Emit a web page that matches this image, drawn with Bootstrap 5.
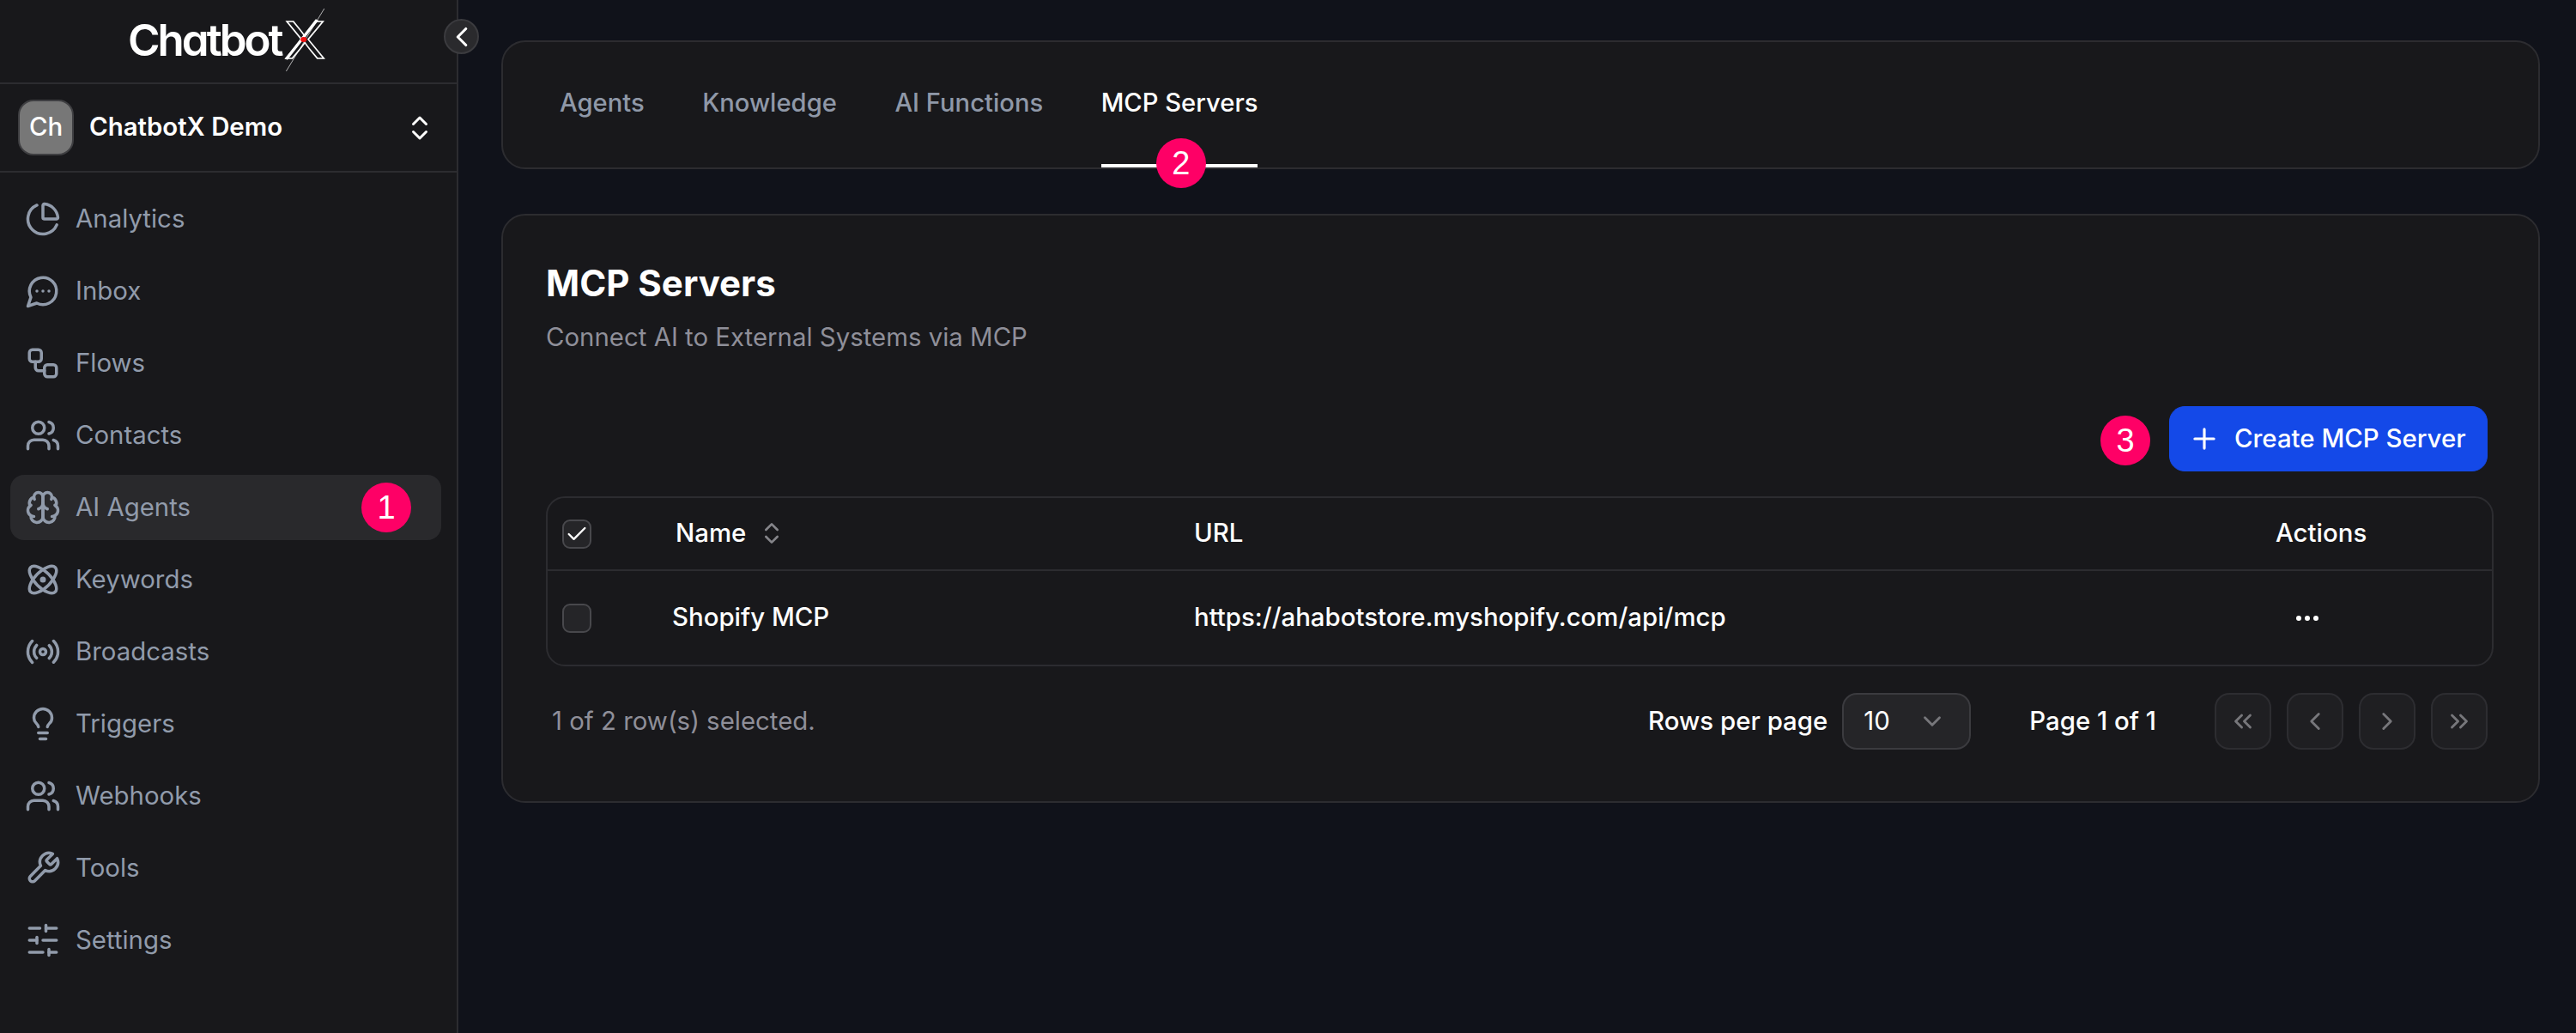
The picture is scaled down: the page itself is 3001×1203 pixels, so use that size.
<!DOCTYPE html>
<html lang="en">
<head>
    <meta charset="UTF-8">
    <meta name="viewport" content="width=device-width, initial-scale=1.0">
    <title>MCP Servers</title>
    <link href="https://cdn.jsdelivr.net/npm/bootstrap@5.3.0/dist/css/bootstrap.min.css" rel="stylesheet">
    <style>
        html, body { height: 100%; }
        body {
            font-family: Inter, "Liberation Sans", sans-serif;
            background-color: #10121a;
            color: #fff;
            font-size: 29.4px;
            overflow: hidden;
        }
        svg.ico { fill: none; stroke: currentColor; stroke-width: 2; stroke-linecap: round; stroke-linejoin: round; flex-shrink: 0; display: block; }

        .side-bar { width: 534px; height: 100%; background-color: #18181b; border-right: 2px solid #2c2c30; position: relative; flex-shrink: 0; }
        .side-logo { height: 98px; border-bottom: 2px solid #2c2c30; padding-left: 149px; padding-bottom: 4px; }
        .logo-word { font-size: 51px; font-weight: 600; line-height: 1; letter-spacing: -3px; font-feature-settings: "cv11"; }
        .logo-x { position: relative; display: inline-block; font-size: 59px; font-weight: 400; line-height: 1; color: #18181b; -webkit-text-stroke: 1.4px #fff; margin-left: 7px; transform: scaleX(1.2); }
        .logo-x svg { position: absolute; left: -8px; top: -10px; }
        .collapse-btn { position: absolute; left: 517px; top: 22px; width: 41px; height: 41px; border-radius: 50%; background-color: #2a2a2d; border: 2px solid #3b3b3f; color: #fff; padding: 0; }
        .org-pick { height: 103px; border-bottom: 2px solid #2c2c30; padding: 0 25px 0 21px; }
        .org-avatar { width: 65px; height: 65px; border-radius: 18px; background-color: #777; border: 2px solid #3f3f42; font-size: 29.4px; font-weight: 500; }
        .org-name { font-weight: 600; margin-left: 18px; }

        .side-nav { padding: 16px 18px 0 12px; gap: 8px; }
        .side-nav .nav-link { height: 76px; padding: 0 0 0 17px; border-radius: 16px; color: #919bab; gap: 17px; position: relative; font-size: 29.4px; }
        .side-nav .nav-link.on { background-color: #29292c; }

        .step-dot { position: absolute; width: 58px; height: 58px; border-radius: 50%; background-color: #fe0066; color: #fff; font-family: "Liberation Sans", Arial, sans-serif; font-size: 38px; font-weight: 400; line-height: 1; display: flex; align-items: center; justify-content: center; z-index: 2; }
        .dot-one { right: 35px; top: 9px; }
        .dot-two { left: 64px; bottom: -24px; }
        .dot-three { right: 400px; top: 11px; }

        .main-pane { padding: 47px 42px 0 50px; }
        .pane-card { background-color: #18181b; border: 2px solid #2c2c30; border-radius: 28px; }
        .tab-card { height: 150px; padding-left: 66px; gap: 67.5px; margin-bottom: 52px; }
        .tab-item { position: relative; color: #8f98a8; font-weight: 500; font-size: 29.2px; height: 100%; padding-top: 53px; line-height: 36px; text-decoration: none; }
        .tab-item.on { color: #fff; }
        .tab-item.on::after { content: ""; position: absolute; left: 0; right: 0; bottom: 0; height: 4px; background-color: #fff; }

        .list-card { padding: 54px 52px 60px 50px; }
        .list-title { font-size: 42px; font-weight: 700; line-height: 50px; margin: 0 0 18px; }
        .list-sub { line-height: 40px; color: #8f8f99; margin: 0 0 60px; }
        .btn-create { width: 371px; height: 76px; background-color: #1449e8; border-color: #1449e8; border-radius: 18px; font-size: 29.4px; font-weight: 500; color: #fff; padding: 0 0 0 21px; gap: 16px; white-space: nowrap; }
        .btn-row { padding-right: 7px; margin-bottom: 29px; position: relative; }

        .grid-wrap { border: 2px solid #2c2c30; border-radius: 22px; overflow: hidden; margin-bottom: 31px; }
        .grid-table { --bs-table-bg: transparent; --bs-table-color: #fff; --bs-table-border-color: #2c2c30; table-layout: fixed; margin: 0; width: 100%; }
        .grid-table > :not(caption) > * > * { padding: 0 0 0 14px; vertical-align: middle; font-weight: 500; font-size: 29.4px; color: #fff; }
        .grid-table thead tr { height: 84px; }
        .grid-table thead th { border-bottom: 2px solid #2c2c30; }
        .grid-table tbody tr { height: 110px; }
        .grid-table tbody td { border-bottom: 0; }
        .grid-table .col-check { padding-left: 17px; }
        .col-w1 { width: 131px; }
        .col-w2 { width: 608px; }
        .col-w3 { width: 1260px; }
        .head-name { padding-left: 4px; gap: 14px; }
        .sort-ico { color: #85858a; }
        .tick-box { width: 34px; height: 34px; border-radius: 9px; background-color: #252528; border: 2px solid #48484c; color: #fff; }
        .row-more { display: block; margin-left: 23px; fill: #fff; }

        .foot-row { padding: 0 7px; height: 66px; }
        .foot-note { color: #8f8f99; }
        .foot-label { font-weight: 500; white-space: nowrap; }
        .size-pick { width: 150px; height: 66px; border: 2px solid #3b3b3f; border-radius: 17px; background-color: #252528; margin-left: 17px; margin-right: 68px; padding: 0 26px 0 23px; }
        .size-ico { color: #77777b; }
        .page-btn { width: 66px; height: 66px; border-radius: 17px; border: 2px solid #2d2d31; background-color: #1f1f22; color: #77777b; padding: 0; }
        .page-set { gap: 18px; margin-left: 68px; }
    </style>
</head>
<body class="d-flex">
    <aside class="side-bar d-flex flex-column">
        <div class="side-logo d-flex align-items-center">
            <span class="logo-word">Chatbot</span>
            <span class="logo-x">X<svg width="60" height="80" viewBox="0 0 60 80"><line x1="47" y1="3" x2="10" y2="76" stroke="#fff" stroke-width="0.6"/><line x1="40" y1="16" x2="10" y2="62" stroke="#fff" stroke-width="3"/><circle cx="27" cy="39" r="3" fill="#f01010"/></svg></span>
        </div>
        <button class="collapse-btn d-flex align-items-center justify-content-center" type="button" aria-label="Collapse">
            <svg class="ico" width="38" height="38" viewBox="0 0 24 24"><path d="m15 18-6-6 6-6"/></svg>
        </button>
        <div class="org-pick d-flex align-items-center">
            <div class="org-avatar d-flex align-items-center justify-content-center">Ch</div>
            <div class="org-name flex-grow-1">ChatbotX Demo</div>
            <svg class="ico" width="36" height="36" viewBox="0 0 24 24"><path d="m7 15 5 5 5-5"/><path d="m7 9 5-5 5 5"/></svg>
        </div>
        <nav class="nav flex-column side-nav">
            <a class="nav-link d-flex align-items-center" href="#"><svg class="ico" width="42" height="42" viewBox="0 0 24 24"><path d="M21 12c.552 0 1.005-.449.95-.998a10 10 0 0 0-8.953-8.951c-.55-.055-.998.398-.998.95v8a1 1 0 0 0 1 1z"/><path d="M21.21 15.89A10 10 0 1 1 8 2.83"/></svg>Analytics</a>
            <a class="nav-link d-flex align-items-center" href="#"><svg class="ico" width="42" height="42" viewBox="0 0 24 24"><path d="M7.9 20A9 9 0 1 0 4 16.1L2 22Z"/><path d="M8 12h.01"/><path d="M12 12h.01"/><path d="M16 12h.01"/></svg>Inbox</a>
            <a class="nav-link d-flex align-items-center" href="#"><svg class="ico" width="42" height="42" viewBox="0 0 24 24"><rect width="8" height="8" x="3" y="3" rx="2"/><path d="M7 11v4a2 2 0 0 0 2 2h4"/><rect width="8" height="8" x="13" y="13" rx="2"/></svg>Flows</a>
            <a class="nav-link d-flex align-items-center" href="#"><svg class="ico" width="42" height="42" viewBox="0 0 24 24"><path d="M16 21v-2a4 4 0 0 0-4-4H6a4 4 0 0 0-4 4v2"/><circle cx="9" cy="7" r="4"/><path d="M22 21v-2a4 4 0 0 0-3-3.87"/><path d="M16 3.13a4 4 0 0 1 0 7.75"/></svg>Contacts</a>
            <a class="nav-link on d-flex align-items-center" href="#"><svg class="ico" width="42" height="42" viewBox="0 0 24 24"><path d="M12 5a3 3 0 1 0-5.997.125 4 4 0 0 0-2.526 5.77 4 4 0 0 0 .556 6.588A4 4 0 1 0 12 18Z"/><path d="M12 5a3 3 0 1 1 5.997.125 4 4 0 0 1 2.526 5.77 4 4 0 0 1-.556 6.588A4 4 0 1 1 12 18Z"/><path d="M15 13a4.5 4.5 0 0 1-3-4 4.5 4.5 0 0 1-3 4"/><path d="M17.599 6.5a3 3 0 0 0 .399-1.375"/><path d="M6.003 5.125A3 3 0 0 0 6.401 6.5"/><path d="M3.477 10.896a4 4 0 0 1 .585-.396"/><path d="M19.938 10.5a4 4 0 0 1 .585.396"/><path d="M6 18a4 4 0 0 1-1.967-.516"/><path d="M19.967 17.484A4 4 0 0 1 18 18"/></svg>AI Agents<span class="step-dot dot-one">1</span></a>
            <a class="nav-link d-flex align-items-center" href="#"><svg class="ico" width="42" height="42" viewBox="0 0 24 24"><circle cx="12" cy="12" r="1"/><path d="M20.2 20.2c2.04-2.03.02-7.36-4.5-11.9-4.54-4.52-9.87-6.54-11.9-4.5-2.04 2.03-.02 7.36 4.5 11.9 4.54 4.52 9.87 6.54 11.9 4.5Z"/><path d="M15.7 15.7c4.52-4.54 6.54-9.87 4.5-11.9-2.03-2.04-7.36-.02-11.9 4.5-4.52 4.54-6.54 9.87-4.5 11.9 2.03 2.04 7.36.02 11.9-4.5Z"/></svg>Keywords</a>
            <a class="nav-link d-flex align-items-center" href="#"><svg class="ico" width="42" height="42" viewBox="0 0 24 24"><path d="M4.9 19.1C1 15.2 1 8.8 4.9 4.9"/><path d="M7.8 16.2c-2.3-2.3-2.3-6.1 0-8.5"/><circle cx="12" cy="12" r="2"/><path d="M16.2 7.8c2.3 2.3 2.3 6.1 0 8.5"/><path d="M19.1 4.9C23 8.8 23 15.1 19.1 19"/></svg>Broadcasts</a>
            <a class="nav-link d-flex align-items-center" href="#"><svg class="ico" width="42" height="42" viewBox="0 0 24 24"><path d="M15 14c.2-1 .7-1.7 1.5-2.5 1-.9 1.5-2.2 1.5-3.5A6 6 0 0 0 6 8c0 1 .2 2.2 1.5 3.5.7.7 1.3 1.5 1.5 2.5"/><path d="M9 18h6"/><path d="M10 22h4"/></svg>Triggers</a>
            <a class="nav-link d-flex align-items-center" href="#"><svg class="ico" width="42" height="42" viewBox="0 0 24 24"><path d="M16 21v-2a4 4 0 0 0-4-4H6a4 4 0 0 0-4 4v2"/><circle cx="9" cy="7" r="4"/><path d="M22 21v-2a4 4 0 0 0-3-3.87"/><path d="M16 3.13a4 4 0 0 1 0 7.75"/></svg>Webhooks</a>
            <a class="nav-link d-flex align-items-center" href="#"><svg class="ico" width="42" height="42" viewBox="0 0 24 24"><path d="M14.7 6.3a1 1 0 0 0 0 1.4l1.6 1.6a1 1 0 0 0 1.4 0l3.77-3.77a6 6 0 0 1-7.94 7.94l-6.91 6.91a2.12 2.12 0 0 1-3-3l6.91-6.91a6 6 0 0 1 7.94-7.94l-3.76 3.76z"/></svg>Tools</a>
            <a class="nav-link d-flex align-items-center" href="#"><svg class="ico" width="42" height="42" viewBox="0 0 24 24"><line x1="21" x2="14" y1="4" y2="4"/><line x1="10" x2="3" y1="4" y2="4"/><line x1="21" x2="12" y1="12" y2="12"/><line x1="8" x2="3" y1="12" y2="12"/><line x1="21" x2="16" y1="20" y2="20"/><line x1="12" x2="3" y1="20" y2="20"/><line x1="14" x2="14" y1="2" y2="6"/><line x1="8" x2="8" y1="10" y2="14"/><line x1="16" x2="16" y1="18" y2="22"/></svg>Settings</a>
        </nav>
    </aside>

    <main class="main-pane flex-grow-1">
        <div class="pane-card tab-card d-flex">
            <a class="tab-item" href="#">Agents</a>
            <a class="tab-item" href="#">Knowledge</a>
            <a class="tab-item" href="#">AI Functions</a>
            <a class="tab-item on" href="#">MCP Servers<span class="step-dot dot-two">2</span></a>
        </div>

        <section class="pane-card list-card">
            <h2 class="list-title">MCP Servers</h2>
            <p class="list-sub">Connect AI to External Systems via MCP</p>

            <div class="btn-row d-flex justify-content-end">
                <span class="step-dot dot-three">3</span>
                <button class="btn btn-primary btn-create d-flex align-items-center" type="button">
                    <svg class="ico" width="38" height="38" viewBox="0 0 24 24" stroke-width="1.6"><path d="M5 12h14"/><path d="M12 5v14"/></svg>
                    Create MCP Server
                </button>
            </div>

            <div class="grid-wrap">
                <table class="table grid-table">
                    <colgroup><col class="col-w1"><col class="col-w2"><col class="col-w3"><col></colgroup>
                    <thead>
                        <tr>
                            <th class="col-check"><div class="tick-box d-flex align-items-center justify-content-center"><svg class="ico" width="28" height="28" viewBox="0 0 24 24" stroke-width="1.6"><path d="M20 6 9 17l-5-5"/></svg></div></th>
                            <th><div class="head-name d-flex align-items-center">Name<svg class="ico sort-ico" width="32" height="32" viewBox="0 0 24 24"><path d="m7 15 5 5 5-5"/><path d="m7 9 5-5 5 5"/></svg></div></th>
                            <th>URL</th>
                            <th>Actions</th>
                        </tr>
                    </thead>
                    <tbody>
                        <tr>
                            <td class="col-check"><div class="tick-box"></div></td>
                            <td>Shopify MCP</td>
                            <td>https://ahabotstore.myshopify.com/api/mcp</td>
                            <td><svg class="row-more" width="28" height="8" viewBox="0 0 28 8"><circle cx="4" cy="4" r="3"/><circle cx="14" cy="4" r="3"/><circle cx="24" cy="4" r="3"/></svg></td>
                        </tr>
                    </tbody>
                </table>
            </div>

            <div class="foot-row d-flex align-items-center justify-content-between">
                <div class="foot-note">1 of 2 row(s) selected.</div>
                <div class="d-flex align-items-center">
                    <span class="foot-label">Rows per page</span>
                    <div class="size-pick d-flex align-items-center justify-content-between">
                        <span>10</span>
                        <svg class="ico size-ico" width="34" height="34" viewBox="0 0 24 24" stroke-width="1.6"><path d="m6 9 6 6 6-6"/></svg>
                    </div>
                    <span class="foot-label">Page 1 of 1</span>
                    <div class="page-set d-flex">
                        <button class="page-btn d-flex align-items-center justify-content-center" type="button" aria-label="First"><svg class="ico" width="34" height="34" viewBox="0 0 24 24" stroke-width="1.8"><path d="m11 17-5-5 5-5"/><path d="m18 17-5-5 5-5"/></svg></button>
                        <button class="page-btn d-flex align-items-center justify-content-center" type="button" aria-label="Previous"><svg class="ico" width="34" height="34" viewBox="0 0 24 24" stroke-width="1.8"><path d="m15 18-6-6 6-6"/></svg></button>
                        <button class="page-btn d-flex align-items-center justify-content-center" type="button" aria-label="Next"><svg class="ico" width="34" height="34" viewBox="0 0 24 24" stroke-width="1.8"><path d="m9 18 6-6-6-6"/></svg></button>
                        <button class="page-btn d-flex align-items-center justify-content-center" type="button" aria-label="Last"><svg class="ico" width="34" height="34" viewBox="0 0 24 24" stroke-width="1.8"><path d="m6 17 5-5-5-5"/><path d="m13 17 5-5-5-5"/></svg></button>
                    </div>
                </div>
            </div>
        </section>
    </main>
</body>
</html>
